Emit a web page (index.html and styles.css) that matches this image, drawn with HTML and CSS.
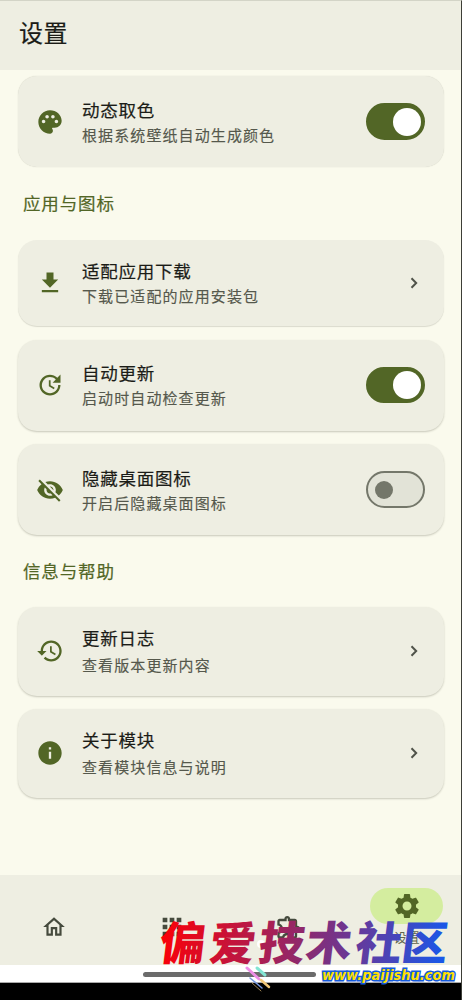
FILE: index.html
```html
<!DOCTYPE html>
<html lang="zh-CN">
<head>
<meta charset="utf-8">
<title>设置</title>
<link rel="stylesheet" href="styles.css">
</head>
<body>
<div class="screen">
  <header class="topbar"><h1>设置</h1></header>
  <main class="content">
    <section class="card card-theme">
      <svg class="icon" viewBox="0 0 24 24"><path d="M12 2C6.490 2 2 6.490 2 12s4.490 10 10 10c1.380 0 2.500-1.120 2.500-2.500 0-.61-.23-1.200-.64-1.670-.08-.1-.13-.21-.13-.33 0-.28.22-.5.5-.5H16c3.310 0 6-2.690 6-6 0-4.960-4.490-9-10-9zM6.500 13C5.670 13 5 12.330 5 11.500S5.670 10 6.500 10 8 10.670 8 11.500 7.330 13 6.500 13zm3-4C8.670 9 8 8.330 8 7.500S8.670 6 9.500 6s1.500.67 1.500 1.500S10.330 9 9.500 9zm5 0c-.83 0-1.500-.67-1.500-1.500S13.670 6 14.500 6s1.500.67 1.500 1.500S15.330 9 14.500 9zm3 4c-.83 0-1.500-.67-1.500-1.500s.67-1.500 1.500-1.500 1.500.67 1.500 1.500-.67 1.500-1.500 1.500z"/></svg>
      <div class="copy"><h3>动态取色</h3><p>根据系统壁纸自动生成颜色</p></div>
      <span class="switch on"></span>
    </section>
    <h2 class="label">应用与图标</h2>
    <section class="card card-download">
      <svg class="icon" viewBox="0 0 24 24"><path d="M19 9h-4V3H9v6H5l7 7 7-7zM5 18v2h14v-2H5z"/></svg>
      <div class="copy"><h3>适配应用下载</h3><p>下载已适配的应用安装包</p></div>
      <svg class="chevron" viewBox="0 0 8 12"><path d="M1.500 1.200 6.200 6 1.500 10.800"/></svg>
    </section>
    <section class="card card-update">
      <svg class="icon" viewBox="0 0 24 24"><path d="M21 10.120h-6.780l2.740-2.820c-2.730-2.700-7.150-2.800-9.880-.1-2.730 2.710-2.730 7.080 0 9.790s7.150 2.710 9.880 0C18.320 15.650 19 14.080 19 12.100h2c0 1.980-.88 4.550-2.640 6.290-3.510 3.480-9.210 3.480-12.720 0-3.500-3.470-3.530-9.110-.02-12.580s9.140-3.470 12.650 0L21 3v7.120zM12.500 8v4.250l3.500 2.080-.72 1.210L11 13V8h1.500z"/></svg>
      <div class="copy"><h3>自动更新</h3><p>启动时自动检查更新</p></div>
      <span class="switch on"></span>
    </section>
    <section class="card card-hide">
      <svg class="icon" viewBox="0 0 24 24"><path d="M12 7c2.760 0 5 2.240 5 5 0 .65-.13 1.260-.36 1.830l2.920 2.920c1.510-1.260 2.700-2.890 3.430-4.750-1.730-4.390-6-7.500-11-7.500-1.400 0-2.740.25-3.980.7l2.160 2.160C10.740 7.130 11.350 7 12 7zM2 4.270l2.280 2.280.46.46C3.080 8.300 1.780 10.020 1 12c1.730 4.390 6 7.500 11 7.500 1.550 0 3.030-.3 4.380-.84l.42.42L19.730 22 21 20.730 3.270 3 2 4.270zM7.530 9.800l1.550 1.550c-.05.21-.08.43-.08.65 0 1.660 1.340 3 3 3 .22 0 .44-.03.65-.08l1.550 1.550c-.67.33-1.410.53-2.200.53-2.760 0-5-2.240-5-5 0-.79.2-1.530.53-2.200zm4.310-.78 3.150 3.150.02-.16c0-1.660-1.340-3-3-3l-.17.01z"/></svg>
      <div class="copy"><h3>隐藏桌面图标</h3><p>开启后隐藏桌面图标</p></div>
      <span class="switch"></span>
    </section>
    <h2 class="label label-info">信息与帮助</h2>
    <section class="card card-link">
      <svg class="icon" viewBox="0 0 24 24"><path d="M13 3c-4.970 0-9 4.030-9 9H1l3.890 3.890.07.14L9 12H6c0-3.870 3.130-7 7-7s7 3.130 7 7-3.130 7-7 7c-1.930 0-3.680-.79-4.940-2.060l-1.420 1.420C8.270 19.990 10.510 21 13 21c4.970 0 9-4.030 9-9s-4.030-9-9-9zm-1 5v5l4.280 2.540.72-1.210-3.500-2.080V8H12z"/></svg>
      <div class="copy"><h3>更新日志</h3><p>查看版本更新内容</p></div>
      <svg class="chevron" viewBox="0 0 8 12"><path d="M1.500 1.200 6.200 6 1.500 10.800"/></svg>
    </section>
    <section class="card card-link">
      <svg class="icon" viewBox="0 0 24 24"><path d="M12 2C6.480 2 2 6.480 2 12s4.480 10 10 10 10-4.480 10-10S17.520 2 12 2zm1 15h-2v-6h2v6zm0-8h-2V7h2v2z"/></svg>
      <div class="copy"><h3>关于模块</h3><p>查看模块信息与说明</p></div>
      <svg class="chevron" viewBox="0 0 8 12"><path d="M1.500 1.200 6.200 6 1.500 10.800"/></svg>
    </section>
  </main>
  <nav class="tabs">
    <a class="tab"><svg class="tab-icon home" viewBox="0 0 24 24"><path d="m12 5.690 5 4.500V18h-2v-6H9v6H7v-7.810l5-4.500M12 3 2 12h3v8h6v-6h2v6h6v-8h3L12 3z"/></svg></a>
    <a class="tab"><svg class="tab-icon" viewBox="0 0 24 24"><path d="M4 8h4V4H4v4zm6 12h4v-4h-4v4zm-6 0h4v-4H4v4zm0-6h4v-4H4v4zm6 0h4v-4h-4v4zm6-10v4h4V4h-4zm-6 4h4V4h-4v4zm6 6h4v-4h-4v4zm0 6h4v-4h-4v4z"/></svg></a>
    <a class="tab"><svg class="tab-icon" viewBox="0 0 24 24"><path d="M10.500 4.500c.28 0 .5.22.5.5v2h6v6h2c.28 0 .5.22.5.5s-.22.5-.5.5h-2v6h-2.120c-.68-1.750-2.390-3-4.380-3s-3.700 1.250-4.380 3H4v-2.120c1.750-.68 3-2.390 3-4.380 0-1.990-1.240-3.700-2.990-4.380L4 7h6V5c0-.28.22-.5.5-.5m0-2C9.120 2.500 8 3.620 8 5H4c-1.100 0-1.990.9-1.990 2v3.800h.29c1.490 0 2.700 1.210 2.700 2.700s-1.210 2.700-2.700 2.700H2V20c0 1.100.9 2 2 2h3.800v-.3c0-1.490 1.210-2.700 2.700-2.700s2.700 1.210 2.700 2.700v.3H17c1.100 0 2-.9 2-2v-4c1.380 0 2.500-1.120 2.500-2.500S20.380 11 19 11V7c0-1.100-.9-2-2-2h-4c0-1.380-1.120-2.500-2.500-2.500z"/></svg></a>
    <a class="tab active"><span class="pill"><svg class="gear" viewBox="0 0 24 24"><path d="M19.140 12.940c.04-.3.06-.61.06-.94s-.02-.64-.07-.94l2.030-1.580c.18-.14.23-.41.12-.61l-1.920-3.320c-.12-.22-.37-.29-.59-.22l-2.390.96c-.5-.38-1.030-.7-1.620-.94l-.36-2.540c-.04-.24-.24-.41-.48-.41h-3.840c-.24 0-.43.17-.47.41l-.36 2.540c-.59.24-1.130.57-1.620.94l-2.390-.96c-.22-.08-.47 0-.59.22L2.740 8.870c-.12.21-.08.47.12.61l2.030 1.580c-.05.3-.09.63-.09.94s.02.64.07.94l-2.030 1.580c-.18.14-.23.41-.12.61l1.920 3.320c.12.22.37.29.59.22l2.390-.96c.5.38 1.030.7 1.620.94l.36 2.540c.05.24.24.41.48.41h3.840c.24 0 .44-.17.47-.41l.36-2.540c.59-.24 1.130-.56 1.620-.94l2.390.96c.22.08.47 0 .59-.22l1.920-3.320c.12-.22.07-.47-.12-.61l-2.010-1.580zM12 15.600c-1.980 0-3.600-1.620-3.600-3.600s1.620-3.600 3.600-3.600 3.600 1.620 3.600 3.600-1.620 3.600-3.600 3.600z"/></svg></span><span class="tab-text">设置</span></a>
  </nav>
  <div class="gesture"><span class="handle"></span></div>
  <svg class="watermark" viewBox="0 0 312 90">
    <defs><linearGradient id="brand" gradientUnits="userSpaceOnUse" x1="10" y1="0" x2="298" y2="0"><stop offset="0" stop-color="#fa0009"/><stop offset=".5" stop-color="#8b2a70"/><stop offset=".75" stop-color="#5540ad"/><stop offset="1" stop-color="#1459ed"/></linearGradient></defs>
    <circle cx="111" cy="34" r="4" fill="#fff"/>
    <g class="brand" transform="translate(0 50) skewX(-7)"><text x="8 58 107 154 204 250" y="0">偏爱技术社区</text></g>
    <g class="sparks"><path d="m97 58 12 11" stroke="#ed8ee7" stroke-width="3"/><path d="m107 58 8 7" stroke="#83e5d3" stroke-width="3"/><path d="m100 68 12 10" stroke="#7898df" stroke-width="1.500"/><path d="m111 70 8 7" stroke="#f2c879" stroke-width="2.500"/><path d="m102 73 9 8" stroke="#9c8252" stroke-width="1"/></g>
    <text class="site" x="172" y="70" textLength="133" lengthAdjust="spacingAndGlyphs">www.paijishu.com</text>
  </svg>
</div>
</body>
</html>
```

FILE: styles.css
```css
* { box-sizing: border-box; }
body { margin: 0; background: #000; font-family: "Noto Sans CJK SC", sans-serif; }
h1, h2, h3, p { margin: 0; font-weight: 400; }
.screen { position: relative; display: flex; flex-direction: column; width: 462px; height: 1000px; overflow: hidden; border-top: 1px solid #d3d4c7; border-right: 1px solid #3d3e37; background: #000; }
.topbar { flex: 0 0 68.500px; padding: 14px 19px; background: #eeeee2; }
h1 { font-size: 24px; line-height: 34px; letter-spacing: .6px; color: #1b1c17; -webkit-text-stroke: .2px; }
.content { flex: 0 0 805.500px; padding: 6.500px 17.500px 0; background: #fafaed; }
.card { display: flex; align-items: center; padding: 0 18.500px; border-radius: 19px; background: #eeeee2; box-shadow: 0 1px 2px rgba(40, 42, 25, .24); }
.card + .card { margin-top: 13.500px; }
.card-theme { height: 91px; box-shadow: 0 0 1px rgba(40, 42, 25, .22); }
.card-download { height: 86px; box-shadow: 0 1px 1px rgba(40, 42, 25, .15); }
.card-download + .card-update { margin-top: 14px; }
.card-update { height: 91px; }
.card-hide { height: 91px; }
.card-link { height: 88.500px; }
.icon { flex: none; width: 28px; height: 28px; fill: #526626; }
.copy { flex: 1; margin-left: 18px; }
.copy h3 { font-size: 17.500px; line-height: 25px; letter-spacing: .75px; color: #1b1c17; -webkit-text-stroke: .2px; }
.copy p { font-size: 15px; line-height: 25px; letter-spacing: 1.100px; color: #55584c; -webkit-text-stroke: .15px; }
.card-link .copy h3 { line-height: 27px; }
.card-link .copy p { line-height: 27px; }
.label { height: 72.500px; padding-left: 5.500px; font-size: 17.500px; line-height: 71px; letter-spacing: .85px; color: #526626; -webkit-text-stroke: .2px; }
.label-info { height: 72px; line-height: 71px; }
.switch { flex: none; display: flex; align-items: center; width: 59px; height: 36.500px; padding-left: 7px; border: 2px solid #74776a; border-radius: 19px; background: #e2e3d7; }
.switch::before { content: ""; width: 18px; height: 18px; border-radius: 50%; background: #74776a; }
.switch.on { padding-left: 25px; border-color: #526626; background: #526626; }
.switch.on::before { width: 28px; height: 28px; background: #fff; }
.chevron { flex: none; width: 8px; height: 12px; margin-right: 7.500px; fill: none; stroke: #50534a; stroke-width: 2; }
.tabs { flex: 0 0 90px; display: flex; gap: 9px; background: #eeeee2; }
.tab { flex: 1; display: flex; flex-direction: column; align-items: center; padding-top: 38px; }
.tab-icon { width: 28px; height: 28px; fill: #454a3d; }
.tab-icon.home { width: 26px; height: 26px; margin-top: 1px; }
.tab.active { padding-top: 13px; }
.pill { display: flex; align-items: center; justify-content: center; width: 73px; height: 36px; border-radius: 18px; background: #d4ed9f; }
.gear { width: 30px; height: 30px; fill: #526626; }
.tab-text { margin-top: 3px; font-size: 13px; line-height: 20px; color: #62674e; }
.gesture { flex: 0 0 18px; display: flex; justify-content: center; padding: 7px 2px 0 0; border-bottom: 1px solid #aaa; background: #fff; }
.handle { width: 173px; height: 5px; border-radius: 3px; background: #6b6b6b; }
.watermark { position: absolute; left: 150px; top: 909px; width: 312px; height: 90px; overflow: visible; }
.brand { font-size: 46px; font-weight: 900; fill: url(#brand); }
.sparks { fill: none; stroke-linecap: round; }
.site { font-family: "DejaVu Sans", sans-serif; font-size: 14px; font-weight: 700; font-style: italic; fill: #ffe000; stroke: #145bdd; stroke-width: 3px; paint-order: stroke; }
```
